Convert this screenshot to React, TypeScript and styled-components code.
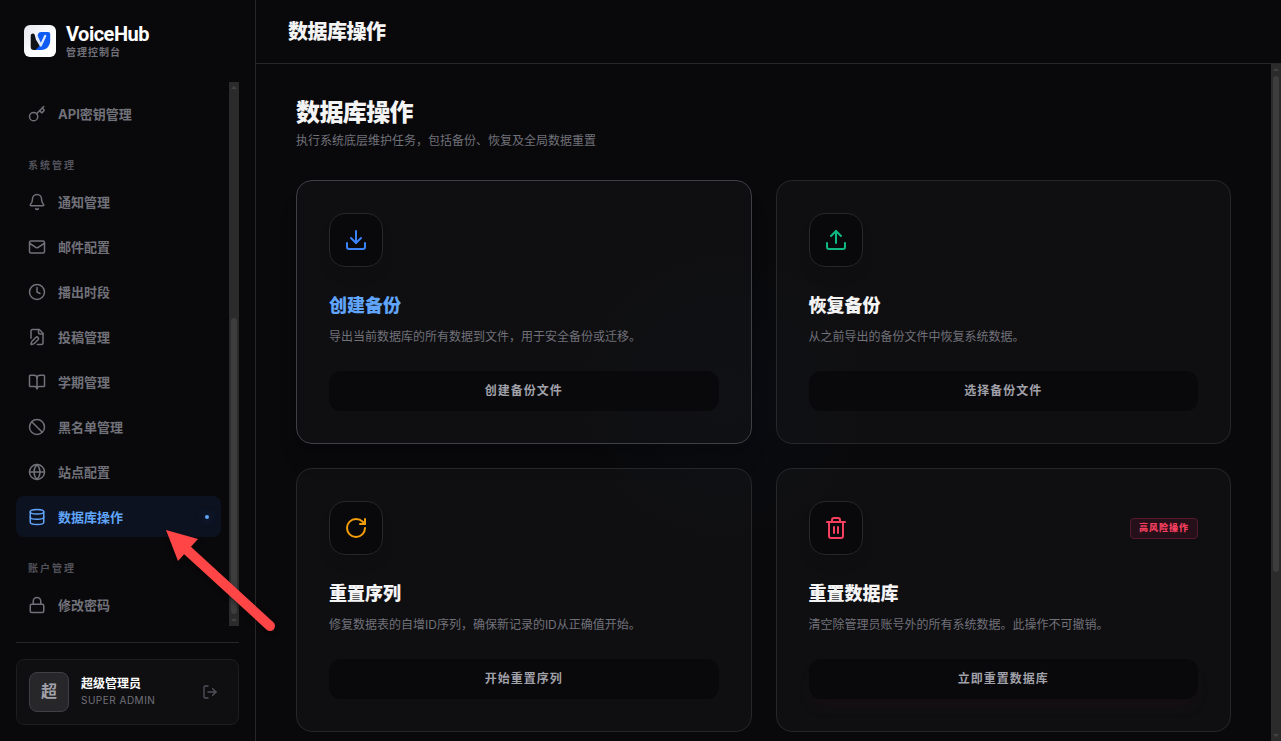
import React from 'react';
import styled, { createGlobalStyle, css } from 'styled-components';
import {
  Ban, Bell, BookOpen, Clock, Database, Download, Globe, Key, Lock, LogOut, Mail, RotateCw, Trash2, Upload,
} from 'lucide-react';

const GlobalStyle = createGlobalStyle`
  *, *::before, *::after { box-sizing: border-box; }
  body {
    margin: 0;
    background: #09090b;
    color: #f4f4f5;
    font-family: Inter, "Noto Sans CJK SC", sans-serif;
  }
  h1, h2, h3, p, ul { margin: 0; padding: 0; }
  ul { list-style: none; }
  button { font-family: inherit; cursor: pointer; }
`;

const Shell = styled.div`
  position: relative;
  display: flex;
  height: 100vh;
  overflow: hidden;
`;

const Sidebar = styled.aside`
  display: flex;
  flex-direction: column;
  flex: none;
  width: 256px;
  border-right: 1px solid #27272a;
`;

const Brand = styled.div`
  display: flex;
  align-items: center;
  gap: 10px;
  height: 82px;
  padding: 0 24px;
`;

const BrandText = styled.div`
  padding-bottom: 2px;
`;

const BrandName = styled.div`
  font-family: Roboto, sans-serif;
  font-size: 20px;
  line-height: 24px;
  font-weight: 700;
  letter-spacing: -0.5px;
  color: #fff;
`;

const BrandSub = styled.div`
  font-size: 10px;
  line-height: 12px;
  font-weight: 700;
  letter-spacing: 1px;
  color: #71717a;
`;

const NavArea = styled.div`
  display: flex;
  flex: 1;
  min-height: 0;
  padding: 0 16px;
  gap: 8px;
`;

const Nav = styled.nav`
  display: flex;
  flex-direction: column;
  flex: 1;
  gap: 23px;
  padding-top: 11px;
  overflow: auto;
  scrollbar-width: none;
`;

const GroupLabel = styled.h3`
  margin-bottom: 8px;
  padding-left: 12px;
  font-size: 10px;
  line-height: 16px;
  font-weight: 700;
  letter-spacing: 2px;
  color: #52525b;
`;

const NavList = styled.ul`
  display: flex;
  flex-direction: column;
  gap: 4px;
`;

const NavLink = styled.a<{ $active?: boolean }>`
  display: flex;
  align-items: center;
  gap: 12px;
  height: 41px;
  padding: 0 12px;
  border-radius: 8px;
  font-size: 13px;
  line-height: 20px;
  font-weight: 700;
  text-decoration: none;
  color: #71717a;
  ${(p) => p.$active && css`
    color: #60a5fa;
    background: #0c1220;
  `}
`;

const ActiveDot = styled.span`
  width: 4px;
  height: 4px;
  margin-left: auto;
  border-radius: 50%;
  background: #60a5fa;
  box-shadow: 0 0 8px rgba(59, 130, 246, 0.5);
`;

const Track = styled.div`
  display: flex;
  flex-direction: column;
  align-items: center;
  flex: none;
  width: 10px;
  background: #2b2b2b;
`;

const TrackArrow = styled.svg`
  flex: none;
  width: 10px;
  height: 12px;
  fill: #424242;
`;

const TrackSpace = styled.div<{ $grow: number }>`
  flex: ${(p) => p.$grow} 0 0;
`;

const Thumb = styled.div<{ $grow: number }>`
  flex: ${(p) => p.$grow} 0 0;
  width: 6px;
  border-radius: 3px;
  background: #3d3d3d;
`;

const SidebarFooter = styled.div`
  margin: 16px 16px;
  padding-top: 16px;
  border-top: 1px solid #27272a;
`;

const Profile = styled.div`
  display: flex;
  align-items: center;
  gap: 12px;
  padding: 12px;
  border: 1px solid #1d1d20;
  border-radius: 8px;
  background: #0f0f11;
`;

const Avatar = styled.div`
  display: grid;
  place-items: center;
  width: 40px;
  height: 40px;
  border: 1px solid #3f3f46;
  border-radius: 8px;
  background: #27272a;
  color: #a1a1aa;
  font-size: 16px;
  line-height: 20px;
  padding-bottom: 2px;
  font-weight: 700;
`;

const ProfileText = styled.div`
  flex: 1;
`;

const ProfileName = styled.div`
  font-size: 12px;
  line-height: 16px;
  font-weight: 700;
  color: #fff;
`;

const ProfileRole = styled.div`
  font-size: 10px;
  line-height: 16px;
  letter-spacing: 0.5px;
  color: #71717a;
`;

const LogoutButton = styled.button`
  display: grid;
  place-items: center;
  width: 32px;
  height: 32px;
  padding: 0;
  border: 0;
  background: none;
  color: #52525b;
`;

const Main = styled.main`
  display: flex;
  flex-direction: column;
  flex: 1;
  min-width: 0;
`;

const TopBar = styled.header`
  display: flex;
  align-items: center;
  flex: none;
  height: 64px;
  padding: 0 32px;
  border-bottom: 1px solid #27272a;
`;

const TopTitle = styled.h1`
  font-size: 20px;
  line-height: 28px;
  font-weight: 900;
  letter-spacing: -0.5px;
  color: #f4f4f5;
`;

const Body = styled.div`
  display: flex;
  flex: 1;
  min-height: 0;
`;

const Content = styled.div`
  flex: 1;
  padding: 33px 40px;
  overflow: auto;
  scrollbar-width: none;
  background: radial-gradient(circle 150px at 46% 49%, rgba(37, 99, 235, 0.03), transparent);
`;

const PageTitle = styled.h2`
  font-size: 24px;
  line-height: 32px;
  font-weight: 900;
  letter-spacing: -0.6px;
  color: #f4f4f5;
`;

const PageIntro = styled.p`
  margin: 4px 0 31px;
  font-size: 12px;
  line-height: 16px;
  color: #71717a;
`;

const CardGrid = styled.div`
  display: grid;
  grid-template-columns: repeat(2, minmax(0, 1fr));
  gap: 24px;
`;

const Card = styled.section<{ $highlight?: boolean }>`
  padding: 32px;
  border: 1px solid ${(p) => (p.$highlight ? '#3f3f46' : '#27272a')};
  border-radius: 16px;
  background: rgba(24, 24, 27, 0.4);
  ${(p) => p.$highlight && css`
    box-shadow: 0 20px 25px -5px rgba(0, 0, 0, 0.1), 0 8px 10px -6px rgba(0, 0, 0, 0.1);
  `}
`;

const CardTop = styled.div`
  display: flex;
  align-items: center;
  justify-content: space-between;
`;

const IconTile = styled.div<{ $color: string }>`
  display: grid;
  place-items: center;
  width: 54px;
  height: 54px;
  border: 1px solid #27272a;
  border-radius: 16px;
  background: #09090b;
  color: ${(p) => p.$color};
  box-shadow: 0 10px 15px -3px rgba(0, 0, 0, 0.1);
`;

const RiskBadge = styled.span`
  padding: 2px 8px 4px;
  border: 1px solid #561a2a;
  border-radius: 4px;
  background: #25101a;
  color: #f43f5e;
  font-size: 9px;
  line-height: 13px;
  font-weight: 900;
  letter-spacing: 1px;
`;

const CardTitle = styled.h3<{ $highlight?: boolean }>`
  margin-top: 25px;
  font-size: 18px;
  line-height: 28px;
  font-weight: 900;
  color: ${(p) => (p.$highlight ? '#60a5fa' : '#f4f4f5')};
`;

const CardText = styled.p`
  margin: 7px 0 24px;
  font-size: 12px;
  line-height: 20px;
  color: #71717a;
`;

const CardButton = styled.button<{ $danger?: boolean }>`
  display: block;
  width: 100%;
  height: 40px;
  border: 0;
  border-radius: 12px;
  background: #09090b;
  color: #a1a1aa;
  font-size: 12px;
  line-height: 16px;
  font-weight: 700;
  letter-spacing: 1px;
  ${(p) => p.$danger && css`
    box-shadow: 0 10px 15px -3px rgba(76, 5, 25, 0.1);
  `}
`;

const Pointer = styled.svg`
  position: absolute;
  left: 160px;
  top: 524px;
  width: 124px;
  height: 116px;
  pointer-events: none;
  filter: drop-shadow(0 2px 2px rgba(0, 0, 0, 0.5));
`;

function Logo() {
  return (
    <svg width="32" height="32" viewBox="0 0 32 32" aria-hidden="true">
      <defs>
        <linearGradient id="tile" x1="0" y1="0" x2="1" y2="1">
          <stop offset="0" stopColor="#e4e7ef" />
          <stop offset="0.6" stopColor="#ffffff" />
        </linearGradient>
      </defs>
      <rect width="32" height="32" rx="6" fill="url(#tile)" />
      <path d="M9 8.500c-1.600 0-2.300 1-2.300 2.600V22c0 2 1 3 3 3h3l3.500-3.500-4-6.500c-1-1.600-.7-6.500-3.200-6.500z" fill="#101318" />
      <path d="M13.500 11.500c.2-3 1.200-4.500 3.700-4.500H24c1.500 0 2.200.8 2.200 2.200V15c0 6-3.400 10-9.200 10h-5.500l4-4z" fill="#0f5cf5" />
      <path d="M12.800 11.500l4 9 4.400-9.500" fill="none" stroke="#dfe7fb" strokeWidth="2.200" strokeLinecap="round" strokeLinejoin="round" />
    </svg>
  );
}

function FilePen({ size = 18 }: { size?: number }) {
  return (
    <svg width={size} height={size} viewBox="0 0 24 24" fill="none" stroke="currentColor" strokeWidth="2" strokeLinecap="round" strokeLinejoin="round" aria-hidden="true">
      <path d="M12.500 22H18a2 2 0 0 0 2-2V7l-5-5H6a2 2 0 0 0-2 2v9.500" />
      <path d="M14 2v4a2 2 0 0 0 2 2h4" />
      <path d="M13.378 15.626a1 1 0 1 0-3.004-3.004l-5.010 5.012a2 2 0 0 0-.506.854l-.837 2.870a.5.5 0 0 0 .620.620l2.870-.837a2 2 0 0 0 .854-.506z" />
    </svg>
  );
}

type IconType = React.ComponentType<{ size?: number }>;
type Entry = { text: string; icon: IconType; active?: boolean };

const groups: { label?: string; items: Entry[] }[] = [
  { items: [{ text: 'API密钥管理', icon: Key }] },
  {
    label: '系统管理',
    items: [
      { text: '通知管理', icon: Bell },
      { text: '邮件配置', icon: Mail },
      { text: '播出时段', icon: Clock },
      { text: '投稿管理', icon: FilePen },
      { text: '学期管理', icon: BookOpen },
      { text: '黑名单管理', icon: Ban },
      { text: '站点配置', icon: Globe },
      { text: '数据库操作', icon: Database, active: true },
    ],
  },
  { label: '账户管理', items: [{ text: '修改密码', icon: Lock }] },
];

type Operation = {
  title: string; text: string; action: string; icon: IconType; color: string;
  highlight?: boolean; risk?: string;
};

const operations: Operation[] = [
  { title: '创建备份', text: '导出当前数据库的所有数据到文件，用于安全备份或迁移。', action: '创建备份文件', icon: Download, color: '#3b82f6', highlight: true },
  { title: '恢复备份', text: '从之前导出的备份文件中恢复系统数据。', action: '选择备份文件', icon: Upload, color: '#10b981' },
  { title: '重置序列', text: '修复数据表的自增ID序列，确保新记录的ID从正确值开始。', action: '开始重置序列', icon: RotateCw, color: '#f59e0b' },
  { title: '重置数据库', text: '清空除管理员账号外的所有系统数据。此操作不可撤销。', action: '立即重置数据库', icon: Trash2, color: '#f43f5e', risk: '高风险操作' },
];

function ScrollTrack({ before, thumb, after }: { before: number; thumb: number; after: number }) {
  return (
    <Track aria-hidden="true">
      <TrackArrow viewBox="0 0 10 12"><path d="M2 7l3-3 3 3z" /></TrackArrow>
      <TrackSpace $grow={before} />
      <Thumb $grow={thumb} />
      <TrackSpace $grow={after} />
      <TrackArrow viewBox="0 0 10 12"><path d="M2 5l3 3 3-3z" /></TrackArrow>
    </Track>
  );
}

export default function App() {
  return (
    <>
      <GlobalStyle />
      <Shell>
        <Sidebar>
          <Brand>
            <Logo />
            <BrandText>
              <BrandName>VoiceHub</BrandName>
              <BrandSub>管理控制台</BrandSub>
            </BrandText>
          </Brand>
          <NavArea>
            <Nav>
              {groups.map((group, i) => (
                <div key={i}>
                  {group.label && <GroupLabel>{group.label}</GroupLabel>}
                  <NavList>
                    {group.items.map(({ text, icon: Icon, active }) => (
                      <li key={text}>
                        <NavLink href="#" $active={active} aria-current={active ? 'page' : undefined}>
                          <Icon size={18} />
                          <span>{text}</span>
                          {active && <ActiveDot />}
                        </NavLink>
                      </li>
                    ))}
                  </NavList>
                </div>
              ))}
            </Nav>
            <ScrollTrack before={224} thumb={296} after={0} />
          </NavArea>
          <SidebarFooter>
            <Profile>
              <Avatar>超</Avatar>
              <ProfileText>
                <ProfileName>超级管理员</ProfileName>
                <ProfileRole>SUPER ADMIN</ProfileRole>
              </ProfileText>
              <LogoutButton type="button" aria-label="退出登录"><LogOut size={16} /></LogoutButton>
            </Profile>
          </SidebarFooter>
        </Sidebar>
        <Main>
          <TopBar><TopTitle>数据库操作</TopTitle></TopBar>
          <Body>
            <Content>
              <PageTitle>数据库操作</PageTitle>
              <PageIntro>执行系统底层维护任务，包括备份、恢复及全局数据重置</PageIntro>
              <CardGrid>
                {operations.map(({ title, text, action, icon: Icon, color, highlight, risk }) => (
                  <Card key={title} $highlight={highlight}>
                    <CardTop>
                      <IconTile $color={color}><Icon size={24} /></IconTile>
                      {risk && <RiskBadge>{risk}</RiskBadge>}
                    </CardTop>
                    <CardTitle $highlight={highlight}>{title}</CardTitle>
                    <CardText>{text}</CardText>
                    <CardButton type="button" $danger={Boolean(risk)}>{action}</CardButton>
                  </Card>
                ))}
              </CardGrid>
            </Content>
            <ScrollTrack before={0} thumb={496} after={157} />
          </Body>
        </Main>
        <Pointer viewBox="0 0 124 116" aria-hidden="true">
          <path d="M27 26L110 102" stroke="#ff4545" strokeWidth="10" strokeLinecap="round" />
          <path d="M6 6l32 9-20 22z" fill="#ff4545" />
        </Pointer>
      </Shell>
    </>
  );
}
